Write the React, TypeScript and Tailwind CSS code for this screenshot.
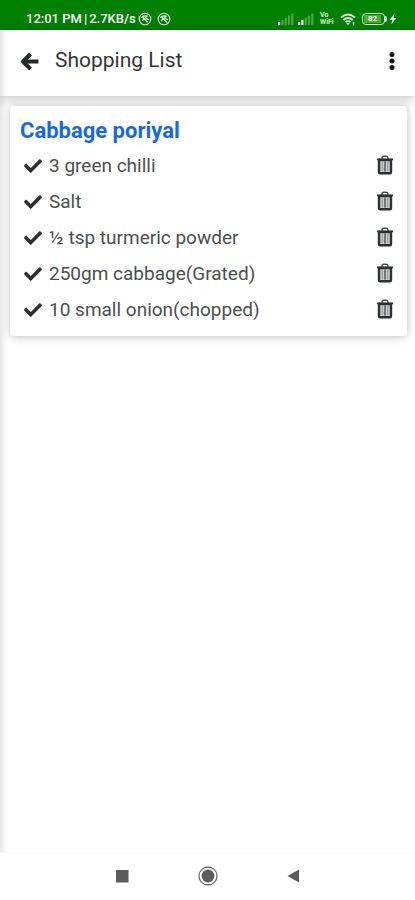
import { useState } from "react";
import { FaCheck } from "react-icons/fa";

const recipe = {
  title: "Cabbage poriyal",
  items: [
    { id: 1, name: "3 green chilli" },
    { id: 2, name: "Salt" },
    { id: 3, name: "½ tsp turmeric powder" },
    { id: 4, name: "250gm cabbage(Grated)" },
    { id: 5, name: "10 small onion(chopped)" },
  ],
};

const TrashIcon = () => (
  <svg viewBox="0 0 18 20" className="w-[18px] h-5" fill="none">
    <path d="M6 4V3Q6 1.2 7.6 1.2H10.4Q12 1.2 12 3V4" stroke="#4a4d4d" strokeWidth="1.4" />
    <path d="M1 4.4H17" stroke="#383b3b" strokeWidth="1.8" />
    <path d="M3 5H15V17.2Q15 18.2 14 18.2H4Q3 18.2 3 17.2Z" fill="#c9cccc" stroke="#2e3131" strokeWidth="2.4" />
    <path d="M6.2 7V16.2M11.8 7V16.2" stroke="#8a8d8d" strokeWidth="0.9" />
    <path d="M9 6.5V16.5" stroke="#3b3e3e" strokeWidth="1.2" />
  </svg>
);

const CompassIcon = () => (
  <svg viewBox="0 0 14 14" className="w-3.5 h-3.5" fill="none" stroke="#e4f3e4">
    <circle cx="7" cy="7" r="5.8" strokeWidth="1.1" />
    <path d="M3.2 5.6Q6 2.8 9.8 4.4M4.8 5.2L10.2 10.6M4 8.8L8.6 5M8 6.5L11 7.6" strokeWidth="1.3" />
  </svg>
);

const SignalIcon = ({ level }: { level: number }) => (
  <svg viewBox="0 0 16 12" className="w-4 h-3">
    {[0, 1, 2, 3, 4].map((bar) => (
      <rect
        key={bar}
        x={bar * 3.3}
        y={9 - bar * 2.1}
        width="2.2"
        height={3 + bar * 2.1}
        fill={bar < level ? "#e8f8e8" : "#4da64d"}
      />
    ))}
  </svg>
);

const WifiIcon = () => (
  <svg viewBox="0 0 16 13" className="w-4 h-[13px]" fill="none" stroke="#d9f0d9">
    <path d="M1 4.5Q8 -1.5 15 4.5M3.3 7Q8 3 12.7 7M5.5 9.2Q8 7.2 10.5 9.2" strokeWidth="1.7" />
    <path d="M6.2 10L8 12.3L9.8 10Z" fill="#d9f0d9" stroke="none" />
    <path d="M13.5 9V12.5" strokeWidth="1.4" />
  </svg>
);

const StatusBar = () => (
  <div className="h-[30px] shrink-0 bg-[#008000] text-white flex items-center justify-between pl-[26px] pr-[18px] pt-2">
    <div className="flex items-center">
      <span className="flex gap-0.5 text-[13px] leading-4 font-medium">
        <span>12:01 PM</span>
        <span>|</span>
        <span>2.7KB/s</span>
      </span>
      <span className="flex gap-[5px] ml-0.5">
        <CompassIcon />
        <CompassIcon />
      </span>
    </div>
    <div className="flex items-center">
      <SignalIcon level={1} />
      <span className="ml-1"><SignalIcon level={2} /></span>
      <span className="ml-1.5 w-4 flex flex-col text-[7px] leading-[7px] font-bold text-[#d9f0d9]">
        <span>Vo</span>
        <span>WiFi</span>
      </span>
      <span className="ml-1"><WifiIcon /></span>
      <span className="ml-1.5 w-[23px] h-3 rounded-sm border border-[#d9f0d9] p-px">
        <span className="block h-full w-[17px] bg-[#4caf2e] text-[8px] leading-2 font-bold text-center">82</span>
      </span>
      <span className="w-0.5 h-1.5 bg-[#d9f0d9] rounded-r-sm"></span>
      <svg viewBox="0 0 8 12" className="ml-0.5 w-2 h-3">
        <path d="M5.5 0.5L0.5 7H3.5L2 11.5L7.5 5H4.5Z" fill="#e8f8e8" />
      </svg>
    </div>
  </div>
);

const App = () => {
  const [items, setItems] = useState(recipe.items);

  const removeItem = (id: number) => {
    setItems(items.filter((item) => item.id !== id));
  };

  return (
    <div className="min-h-screen flex flex-col bg-white font-['Roboto','Noto_Sans',sans-serif]">
      <StatusBar />

      <div className="flex-1 flex flex-col bg-linear-to-r from-[#e6e6e6] to-white to-[7px]">
        <header className="h-[66px] flex items-center pl-5 pr-[13px] pb-1 shadow-[0_2px_12px_rgba(0,0,0,0.26)]">
          <button aria-label="Back">
            <svg viewBox="0 0 20 20" className="w-5 h-5" fill="none" stroke="#282b2b" strokeWidth="4" strokeLinejoin="round">
              <path d="M18.5 10.5H3M10.5 3L3 10.5L10.5 18" />
            </svg>
          </button>
          <h1 className="ml-[15px] text-[21px] leading-7 text-[#333636] pb-0.5">Shopping List</h1>
          <button aria-label="More options" className="ml-auto">
            <svg viewBox="0 0 20 20" className="w-5 h-5" fill="#111">
              <circle cx="10" cy="3.5" r="2.5" />
              <circle cx="10" cy="10" r="2.5" />
              <circle cx="10" cy="16.5" r="2.5" />
            </svg>
          </button>
        </header>

        <main className="flex-1 pt-2.5 pl-2.5 pr-2">
          <section className="bg-white rounded-sm pt-2 pb-2 shadow-[0_1px_8px_rgba(0,0,0,0.25)]">
            <h2 className="pl-2.5 text-[22px] leading-[34px] font-bold text-[#1769de]">{recipe.title}</h2>
            <ul>
              {items.map((item) => (
                <li key={item.id} className="h-9 flex items-center pl-3.5 pr-[13px]">
                  <FaCheck className="w-[18px] h-[18px] text-[#2d3030]" />
                  <span className="ml-[7px] text-[19px] leading-6 text-[#4c4f4f]">{item.name}</span>
                  <button aria-label={`Remove ${item.name}`} onClick={() => removeItem(item.id)} className="ml-auto pb-0.5">
                    <TrashIcon />
                  </button>
                </li>
              ))}
            </ul>
          </section>
        </main>
      </div>

      <nav className="h-12 shrink-0 flex items-center justify-center gap-[66px] border-t border-[#f7f7f7] bg-white pb-0.5">
        <button aria-label="Recent apps">
          <svg viewBox="0 0 20 20" className="w-5 h-5" fill="#5c5c5c">
            <rect x="4" y="4" width="12.5" height="12.5" rx="0.5" />
          </svg>
        </button>
        <button aria-label="Home">
          <svg viewBox="0 0 20 20" className="w-5 h-5">
            <circle cx="10" cy="10" r="9" fill="none" stroke="#707070" strokeWidth="1.3" />
            <circle cx="10" cy="10" r="6.4" fill="#5c5c5c" />
          </svg>
        </button>
        <button aria-label="Go back">
          <svg viewBox="0 0 20 20" className="w-5 h-5" fill="#5c5c5c">
            <path d="M3.5 10L15 3.5V16.5Z" />
          </svg>
        </button>
      </nav>
    </div>
  );
};

export default App;
